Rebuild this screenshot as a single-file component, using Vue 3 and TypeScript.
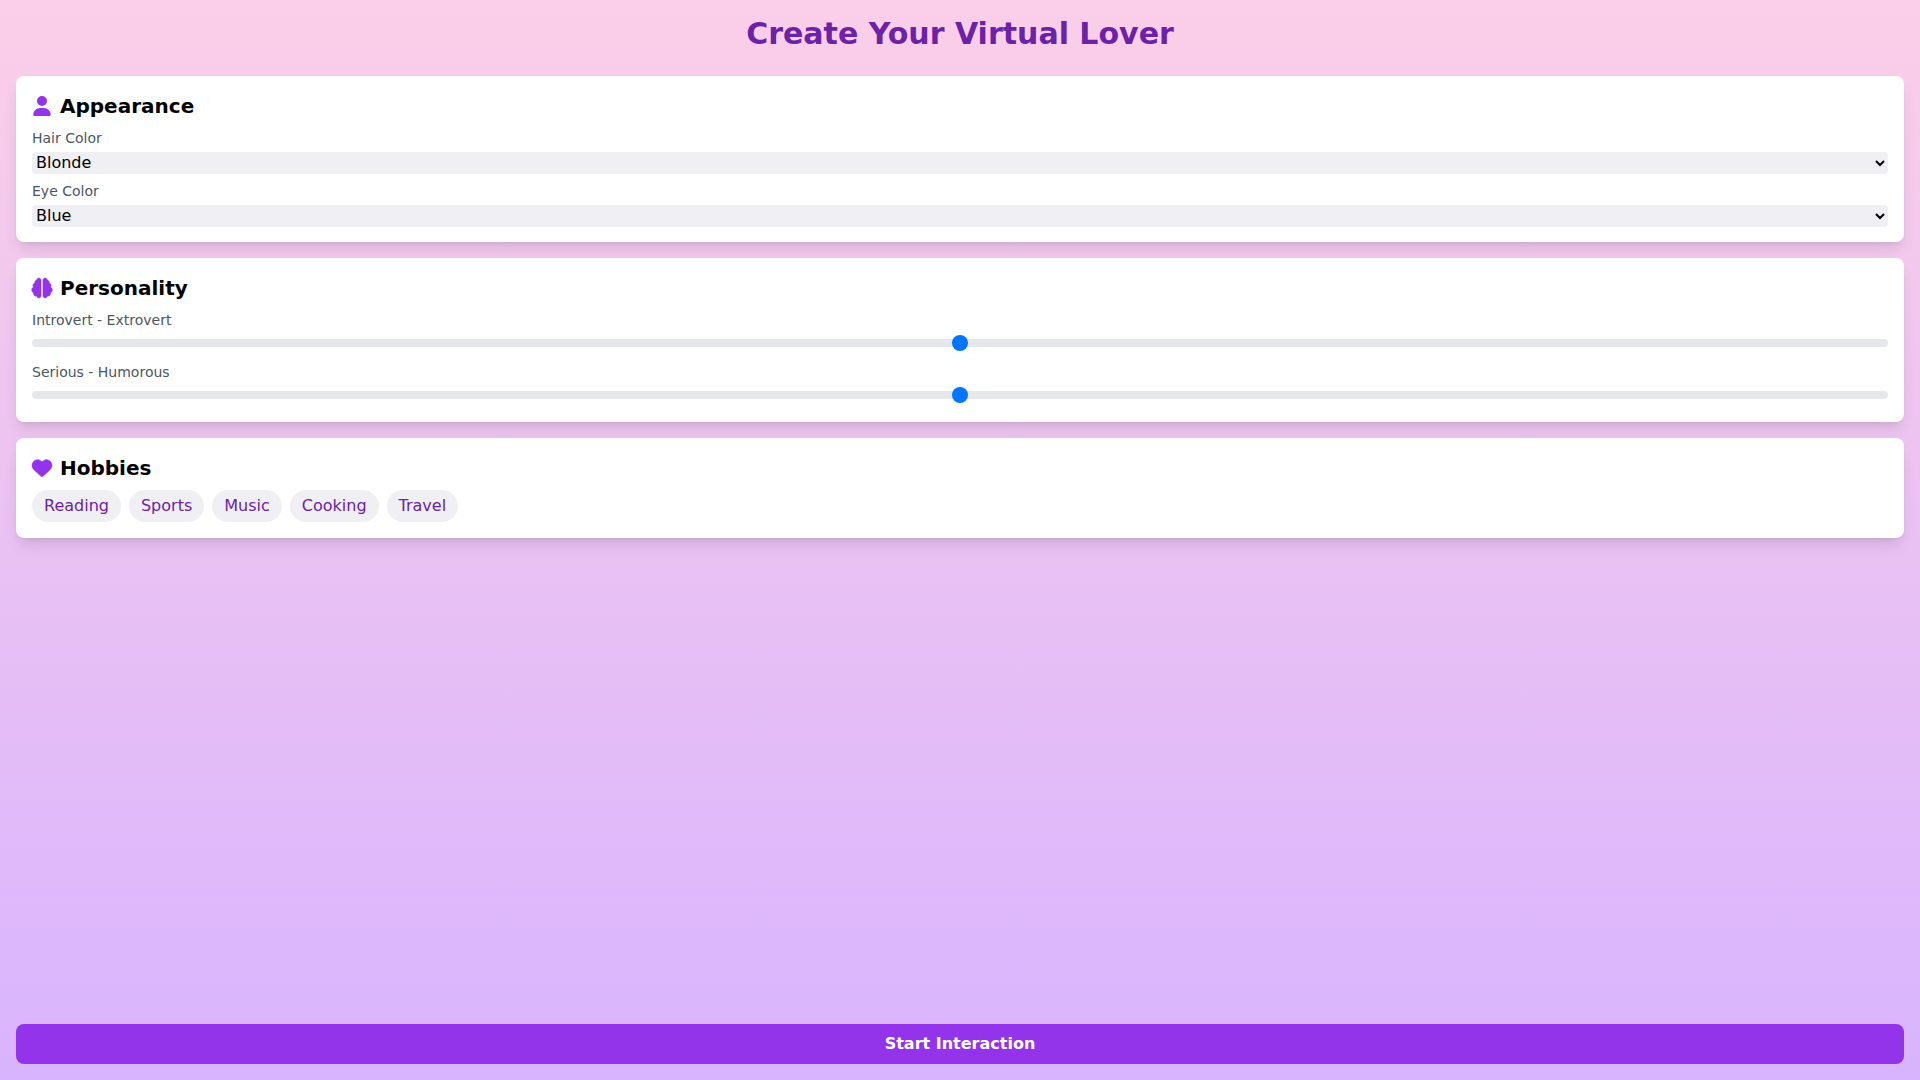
<script setup lang="ts">
const hobbies: string[] = ['Reading', 'Sports', 'Music', 'Cooking', 'Travel']
</script>

<template>
  <div class="page">
    <h1 class="title">Create Your Virtual Lover</h1>
    <div class="cards">
      <section class="card">
        <h2 class="card-title">
          <svg class="icon user" viewBox="0 0 448 512"><path d="M224 256a128 128 0 1 0 0-256 128 128 0 1 0 0 256zm-45.700 48C79.800 304 0 383.800 0 482.300 0 498.700 13.300 512 29.700 512h388.600c16.400 0 29.700-13.300 29.700-29.700C448 383.800 368.200 304 269.700 304h-91.400z"/></svg>
          Appearance
        </h2>
        <div class="fields">
          <div class="field">
            <label class="label">Hair Color</label>
            <select class="select"><option>Blonde</option><option>Brown</option><option>Black</option></select>
          </div>
          <div class="field">
            <label class="label">Eye Color</label>
            <select class="select"><option>Blue</option><option>Green</option><option>Brown</option></select>
          </div>
        </div>
      </section>
      <section class="card">
        <h2 class="card-title">
          <svg class="icon bold" viewBox="0 0 512 512">
            <path transform="translate(-8 0)" d="M184 0c30.900 0 56 25.100 56 56v400c0 30.900-25.100 56-56 56-28.900 0-52.700-21.900-55.700-50.100-5.200 1.400-10.700 2.100-16.300 2.100-35.300 0-64-28.700-64-64 0-7.400 1.300-14.600 3.600-21.200C21.400 367.400 0 338.200 0 304c0-31.900 18.700-59.500 45.800-72.300C37.100 220.800 32 207 32 192c0-30.700 21.600-56.300 50.400-62.600C80.800 123.900 80 118 80 112c0-29.900 20.600-55.100 48.300-62.100C131.300 21.900 155.100 0 184 0z"/>
            <path transform="translate(8 0)" d="M328 0c28.900 0 52.600 21.900 55.700 49.900 27.800 7 48.300 32.100 48.300 62.100 0 6-.8 11.900-2.400 17.400 28.800 6.200 50.400 31.900 50.400 62.600 0 15-5.100 28.800-13.800 39.700C493.300 244.500 512 272.100 512 304c0 34.200-21.400 63.400-51.600 74.800 2.300 6.600 3.600 13.800 3.600 21.200 0 35.300-28.700 64-64 64-5.600 0-11.100-.7-16.300-2.100-3 28.200-26.800 50.100-55.700 50.100-30.900 0-56-25.100-56-56V56c0-30.900 25.100-56 56-56z"/>
          </svg>
          Personality
        </h2>
        <div class="fields">
          <div class="field">
            <label class="label">Introvert - Extrovert</label>
            <input class="range" type="range" min="0" max="100" value="50" />
          </div>
          <div class="field">
            <label class="label">Serious - Humorous</label>
            <input class="range" type="range" min="0" max="100" value="50" />
          </div>
        </div>
      </section>
      <section class="card">
        <h2 class="card-title">
          <svg class="icon bold" viewBox="0 0 512 512"><path d="M47.600 300.400 228.300 469.100c7.500 7 17.400 10.900 27.700 10.900s20.200-3.900 27.700-10.900l180.700-168.700c30.400-28.300 47.600-68 47.600-109.500v-5.800c0-69.900-50.500-129.500-119.400-141C347 36.500 300.600 51.400 268 84L256 96 244 84c-32.600-32.600-79-47.500-124.600-39.900C50.500 55.600 0 115.200 0 185.100v5.800c0 41.500 17.200 81.200 47.600 109.500z"/></svg>
          Hobbies
        </h2>
        <div class="chips">
          <button v-for="h in hobbies" :key="h" class="chip" type="button">{{ h }}</button>
        </div>
      </section>
    </div>
    <button class="start" type="button">Start Interaction</button>
  </div>
</template>

<style scoped>
.page {
  box-sizing: border-box;
  min-height: 100vh;
  padding: 16px;
  display: flex;
  flex-direction: column;
  background: linear-gradient(to bottom, #fbcfe8, #d8b4fe);
  font-family: "DejaVu Sans", sans-serif;
}
.title {
  margin: 0 0 24px;
  font-size: 30px;
  line-height: 36px;
  font-weight: 700;
  color: #6b21a8;
  text-align: center;
}
.cards {
  display: flex;
  flex-direction: column;
  gap: 16px;
}
.card {
  background: #fff;
  border-radius: 8px;
  padding: 16px;
  box-shadow: 0 10px 15px -3px rgba(0, 0, 0, 0.1), 0 4px 6px -4px rgba(0, 0, 0, 0.1);
}
.card-title {
  margin: 0 0 8px;
  display: flex;
  align-items: center;
  font-size: 20px;
  line-height: 28px;
  font-weight: 700;
  color: #000;
}
.icon {
  height: 20px;
  width: 20px;
  margin-right: 8px;
  fill: #9333ea;
  flex: none;
  overflow: visible;
}
.bold {
  stroke: #9333ea;
  stroke-width: 12;
  stroke-linejoin: round;
}
.fields {
  display: flex;
  flex-direction: column;
  gap: 8px;
}
.field {
  display: flex;
  flex-direction: column;
}
.label {
  display: block;
  margin-bottom: 4px;
  font-size: 14px;
  line-height: 20px;
  color: #4b5563;
}
.select {
  box-sizing: border-box;
  display: block;
  width: 100%;
  height: 21.5px;
  margin-bottom: -0.5px;
  border: none;
  border-radius: 4px;
  background-color: #f0f0f4;
  font-family: "DejaVu Sans", sans-serif;
  font-size: 16px;
  color: #000;
}
.range {
  -webkit-appearance: none;
  appearance: none;
  display: block;
  width: 100%;
  height: 8px;
  margin: 5px 0 7px;
  border-radius: 4px;
  background: #e5e7eb;
}
.range::-webkit-slider-thumb {
  -webkit-appearance: none;
  appearance: none;
  width: 16px;
  height: 16px;
  border-radius: 50%;
  background: #0075ff;
  border: none;
}
.chips {
  display: flex;
  flex-wrap: wrap;
  gap: 8px;
}
.chip {
  padding: 4px 12px;
  border: none;
  border-radius: 9999px;
  background: #f0f0f4;
  color: #6b21a8;
  font-family: "DejaVu Sans", sans-serif;
  font-size: 16px;
  line-height: 24px;
}
.start {
  margin-top: auto;
  width: 100%;
  padding: 8px 16px;
  line-height: 24px;
  border: none;
  border-radius: 8px;
  background: #9333ea;
  color: #fff;
  font-family: "DejaVu Sans", sans-serif;
  font-size: 16px;
  font-weight: 700;
}
</style>
